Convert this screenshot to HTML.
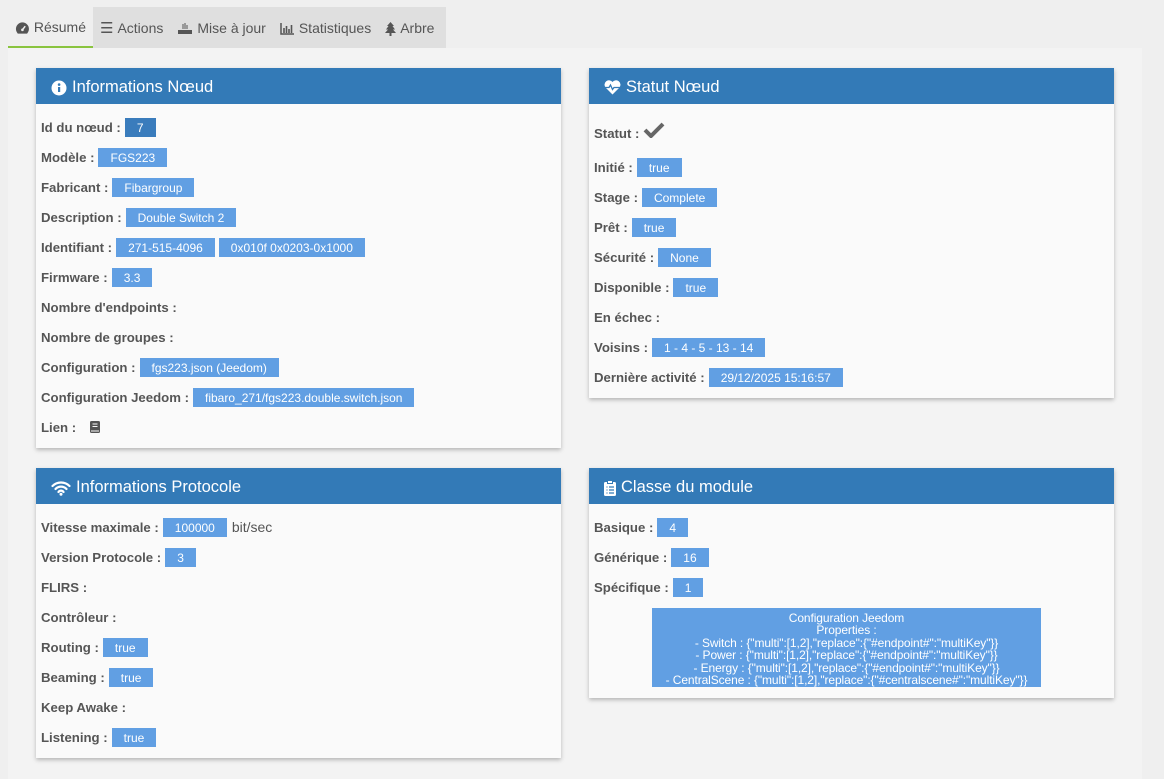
<!DOCTYPE html>
<html><head><meta charset="utf-8"><style>
*{box-sizing:border-box;margin:0;padding:0}
body{width:1164px;height:779px;background:#efefef;font-family:"Liberation Sans",sans-serif;position:relative;overflow:hidden;color:#555}
.tabs{position:absolute;left:8px;top:7px;width:438px;height:41px;background:#dfdfdf;display:flex}
.tab{height:41px;line-height:41px;font-size:14px;color:#555;padding:0 7px;display:flex;align-items:center;gap:4px;padding-top:2px}
.tab.act{background:#efefef;border-bottom:2px solid #8ac43f;width:85px}
.content{position:absolute;left:8px;top:48px;width:1134px;height:731px;background:#f3f3f3}
.panel{position:absolute;width:525px;background:#fafafa;box-shadow:0 2px 4px rgba(0,0,0,.25)}
.hd{height:36px;background:#337ab7;color:#fff;font-size:16.5px;display:flex;align-items:center;padding-left:15px;gap:5px;padding-top:3px}
.bd{padding:8px 5px}
.row{height:30px;display:flex;align-items:center;font-size:13.2px;font-weight:bold;color:#555;white-space:nowrap}
.b{display:inline-block;background:#619fe3;color:#fff;font-weight:normal;font-size:12px;height:19px;line-height:20px;padding:0 12px;margin-left:4px}
.cfg{position:absolute;left:63px;top:140px;width:389px;height:79px;background:#619fe3;color:#fff;font-size:12px;line-height:12.4px;text-align:center;padding-top:4px;white-space:nowrap;letter-spacing:-0.1px;overflow:hidden}
</style></head><body>
<div class="content"></div>
<div class="tabs">
<div class="tab act"><svg width="16" height="14" viewBox="0 0 16 14"><path d="M8 1a7 7 0 0 0-7 7c0 2 .8 3.6 2 5h10c1.2-1.4 2-3 2-5a7 7 0 0 0-7-7z" fill="#555"/><path d="M8 9l3-4" stroke="#efefef" stroke-width="1.6"/><circle cx="8" cy="9" r="1.4" fill="#efefef"/></svg>Résumé</div>
<div class="tab"><span style="font-size:15px">☰</span>Actions</div>
<div class="tab"><svg width="16" height="14" viewBox="0 0 16 14"><rect x="1" y="8" width="14" height="4" fill="#555"/><path d="M6 2v5M8 1v6M10 3v4" stroke="#555"/></svg>Mise à jour</div>
<div class="tab"><svg width="15" height="13" viewBox="0 0 15 13"><path d="M1 1v11h13" stroke="#555" stroke-width="1.5" fill="none"/><path d="M4 6v5M6.5 4v7M9 7v4M11.5 3v8" stroke="#555" stroke-width="1.6"/></svg>Statistiques</div>
<div class="tab"><svg width="11" height="14" viewBox="0 0 11 14"><path d="M5.5 0L9 4H7.5L10 7.5H8L11 11H0L3 7.5H1L3.5 4H2z" fill="#555"/><rect x="4.5" y="11" width="2" height="3" fill="#555"/></svg>Arbre</div>
</div>

<div class="panel" style="left:36px;top:68px;height:380px">
<div class="hd"><svg width="16" height="16" viewBox="0 0 16 16"><circle cx="8" cy="8" r="7.5" fill="#fff"/><rect x="7" y="7" width="2.2" height="5" fill="#337ab7"/><circle cx="8.1" cy="4.6" r="1.3" fill="#337ab7"/></svg>Informations Nœud</div>
<div class="bd">
<div class="row">Id du nœud : <span class="b" style="background:#3a7cbc">7</span></div>
<div class="row">Modèle : <span class="b">FGS223</span></div>
<div class="row">Fabricant : <span class="b">Fibargroup</span></div>
<div class="row">Description : <span class="b">Double Switch 2</span></div>
<div class="row">Identifiant : <span class="b">271-515-4096</span><span class="b">0x010f 0x0203-0x1000</span></div>
<div class="row">Firmware : <span class="b">3.3</span></div>
<div class="row">Nombre d'endpoints :</div>
<div class="row">Nombre de groupes :</div>
<div class="row">Configuration : <span class="b">fgs223.json (Jeedom)</span></div>
<div class="row">Configuration Jeedom : <span class="b">fibaro_271/fgs223.double.switch.json</span></div>
<div class="row">Lien : <svg style="margin-left:14px" width="10" height="12" viewBox="0 0 10 12"><rect x="0" y="0" width="10" height="12" rx="1.5" fill="#555"/><path d="M2.5 3h5M2.5 5.5h5M1 10h8" stroke="#fafafa"/></svg></div>
</div></div>

<div class="panel" style="left:36px;top:468px;height:290px">
<div class="hd"><svg width="20" height="16" viewBox="0 0 20 16"><path d="M1.5 6a12 12 0 0 1 17 0M4.5 9a7.5 7.5 0 0 1 11 0M7.5 12a3 3 0 0 1 5 0" stroke="#fff" stroke-width="2.2" fill="none" stroke-linecap="round"/><circle cx="10" cy="14.3" r="1.5" fill="#fff"/></svg>Informations Protocole</div>
<div class="bd">
<div class="row">Vitesse maximale : <span class="b">100000</span><span style="font-weight:normal;margin-left:5px;font-size:14px">bit/sec</span></div>
<div class="row">Version Protocole : <span class="b">3</span></div>
<div class="row">FLIRS :</div>
<div class="row">Contrôleur :</div>
<div class="row">Routing : <span class="b">true</span></div>
<div class="row">Beaming : <span class="b">true</span></div>
<div class="row">Keep Awake :</div>
<div class="row">Listening : <span class="b">true</span></div>
</div></div>

<div class="panel" style="left:589px;top:68px;height:330px">
<div class="hd"><svg width="17" height="15" viewBox="0 0 17 15"><path d="M8.5 14.5L1.5 7.5A4 4 0 0 1 8.5 2a4 4 0 0 1 7 5.5z" fill="#fff"/><path d="M1 7.5h4l1.5-2.5 2 4.5 1.5-2h6" stroke="#337ab7" stroke-width="1.3" fill="none"/></svg>Statut Nœud</div>
<div class="bd">
<div class="row" style="height:40px;padding-top:2px">Statut : <svg style="margin-left:4px;margin-top:-6px" width="22" height="16" viewBox="0 0 22 16"><path d="M2 8l6 6L20 2" stroke="#666" stroke-width="4" fill="none"/></svg></div>
<div class="row">Initié : <span class="b">true</span></div>
<div class="row">Stage : <span class="b">Complete</span></div>
<div class="row">Prêt : <span class="b">true</span></div>
<div class="row">Sécurité : <span class="b">None</span></div>
<div class="row">Disponible : <span class="b">true</span></div>
<div class="row">En échec :</div>
<div class="row">Voisins : <span class="b">1 - 4 - 5 - 13 - 14</span></div>
<div class="row">Dernière activité : <span class="b">29/12/2025 15:16:57</span></div>
</div></div>

<div class="panel" style="left:589px;top:468px;height:230px">
<div class="hd"><svg width="12" height="16" viewBox="0 0 12 16"><rect x="0" y="2" width="12" height="14" rx="1.5" fill="#fff"/><rect x="3.5" y="0.5" width="5" height="3" fill="#fff" stroke="#337ab7"/><path d="M2.5 7h1M5 7h5M2.5 10h1M5 10h5M2.5 13h1M5 13h5" stroke="#337ab7" stroke-width="1.3"/></svg>Classe du module</div>
<div class="bd">
<div class="row">Basique : <span class="b">4</span></div>
<div class="row">Générique : <span class="b">16</span></div>
<div class="row">Spécifique : <span class="b">1</span></div>
</div>
<div class="cfg">Configuration Jeedom<br>Properties :<br>- Switch : {"multi":[1,2],"replace":{"#endpoint#":"multiKey"}}<br>- Power : {"multi":[1,2],"replace":{"#endpoint#":"multiKey"}}<br>- Energy : {"multi":[1,2],"replace":{"#endpoint#":"multiKey"}}<br>- CentralScene : {"multi":[1,2],"replace":{"#centralscene#":"multiKey"}}</div>
</div>
</body></html>
